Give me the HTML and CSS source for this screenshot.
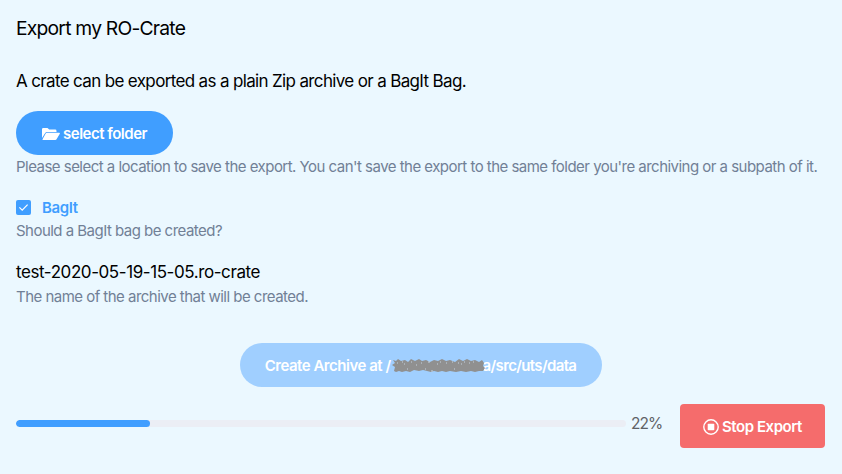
FILE: index.html
```html
<!DOCTYPE html>
<html lang="en">
<head>
<meta charset="utf-8">
<title>Export my RO-Crate</title>
<link rel="stylesheet" href="styles.css">
</head>
<body>
<main class="export">
  <h1 class="title">Export my RO-Crate</h1>
  <p class="lead">A crate can be exported as a plain Zip archive or a BagIt Bag.</p>
  <button class="btn btn-primary" type="button">
    <svg class="folder" viewBox="0 0 18 12" aria-hidden="true"><path d="M0 10V1.3Q0 0 1.3 0H5.5L7.2 1.6H13.2Q14.5 1.6 14.5 2.9V4H5Q3.8 4 3.2 5Z"/><path d="M4.9 4.8H17.3Q18.3 4.8 17.8 5.7L14.7 11.1Q14.2 12 13.2 12H1.1Q.2 12 .7 11.1L3.7 5.5Q4.1 4.8 4.9 4.8Z"/></svg>
    <span>select folder</span>
  </button>
  <p class="help">Please select a location to save the export. You can't save the export to the same folder you're archiving or a subpath of it.</p>
  <label class="check">
    <span class="box"><svg viewBox="0 0 15 15" aria-hidden="true"><path d="M3.4 7.4 6.2 10.1 11.6 4.6"/></svg></span>
    <span>BagIt</span>
  </label>
  <p class="help">Should a BagIt bag be created?</p>
  <p class="archive-name">test-2020-05-19-15-05.ro-crate</p>
  <p class="help">The name of the archive that will be created.</p>
  <div class="create-row">
    <button class="btn btn-disabled" type="button" disabled>
      <span>Create Archive at /</span><svg class="scribble" viewBox="0 0 93 16" aria-hidden="true"><path d="M1 2 4 3 6 1 9 3 13 2 16 4 19 1 23 3 27 1 30 3 34 2 38 4 42 2 46 3 50 1 54 3 58 2 63 4 67 1 71 3 75 1 79 3 83 2 87 4 90 2 92 5 91 8 93 10 91 13 87 13 83 14 79 13 74 14 69 13 64 14 58 13 54 14 50 13 46 14 42 13 39 14 35 13 31 12 27 13 22 12 18 14 14 13 10 14 7 13 4 14 2 13 3 9 0 7 3 5Z"/><path class="gap" d="M5 5h1M10 4h1M19 4h1M24 7h1M29 5h1M36 4h2M40 12v2M48 4h1M54 5h1M60 4h1M66 5h1M72 4h1M81 4h1M15 11h1M33 11h1M62 11h1M12 6h1M45 6h1M69 6h1M77 5h1"/></svg><span class="path">a/src/uts/data</span>
    </button>
  </div>
  <div class="progress-row">
    <div class="track"><div class="fill" style="width:22%"></div></div>
    <span class="percent">22%</span>
    <button class="btn btn-stop" type="button">
      <svg class="stop" viewBox="0 0 16 16" aria-hidden="true"><circle cx="8" cy="8" r="7.2"/><rect x="4.7" y="4.7" width="6.6" height="6.6" rx=".7"/></svg>
      <span>Stop Export</span>
    </button>
  </div>
</main>
</body>
</html>
```
FILE: styles.css
```css
* { box-sizing: border-box; }
body { margin: 0; background: #ebf8ff; color: #000; font-family: Inter, "Liberation Sans", sans-serif; }
.export { display: flex; flex-direction: column; align-items: flex-start; padding: 13px 17px 0 16px; height: 474px; white-space: nowrap; }
h1, p { margin: 0; font-weight: 400; }
.title { font-size: 19.3px; line-height: 30px; letter-spacing: -.78px; }
.lead { margin-top: 25px; font-size: 17px; line-height: 26px; letter-spacing: -.65px; }
.btn { display: flex; align-items: center; justify-content: center; height: 44px; padding: 1px 0 0; border: 0; font: 600 15px/20px Inter, "Liberation Sans", sans-serif; letter-spacing: -.5px; color: #fff; }
.btn-primary { margin-top: 17px; width: 157px; border-radius: 22px; background: #409eff; gap: 3px; }
.folder { width: 18px; height: 12px; fill: currentColor; }
.help { font-size: 15px; line-height: 24px; letter-spacing: -.525px; color: #718096; }
.check { display: flex; align-items: center; gap: 11px; height: 24px; margin-top: 16px; color: #409eff; font-size: 15px; font-weight: 600; letter-spacing: -.4px; }
.box { width: 15px; height: 15px; border-radius: 2px; background: #409eff; }
.box svg { display: block; fill: none; stroke: #fff; stroke-width: 1.2; }
.archive-name { margin-top: 16px; font-size: 17px; line-height: 26px; letter-spacing: -.42px; }
.create-row { display: flex; justify-content: center; width: 100%; margin-top: 34px; }
.btn-disabled { width: 362px; border-radius: 22px; background: #a0cfff; letter-spacing: -.48px; }
.path { letter-spacing: -.65px; }
.scribble { position: relative; width: 93px; height: 16px; margin: 0 -2px 0 1px; fill: #909090; }
.gap { stroke: #c4d2df; stroke-width: 1; }
.progress-row { display: flex; align-items: flex-start; width: 100%; margin-top: 17px; }
.track { width: 610px; height: 7px; margin-top: 16px; border-radius: 4px; background: #ebeef5; overflow: hidden; }
.fill { height: 7px; border-radius: 4px; background: #409eff; }
.percent { width: 49px; margin: 8px 0 0 5px; font-size: 15.5px; line-height: 24px; letter-spacing: -.9px; color: #606266; }
.btn-stop { width: 145px; border-radius: 4px; background: #f56c6c; gap: 3px; letter-spacing: -.45px; }
.stop { width: 16px; height: 16px; fill: none; stroke: #fff; stroke-width: 1.4; }
.stop rect { fill: #fff; stroke: none; }
```
